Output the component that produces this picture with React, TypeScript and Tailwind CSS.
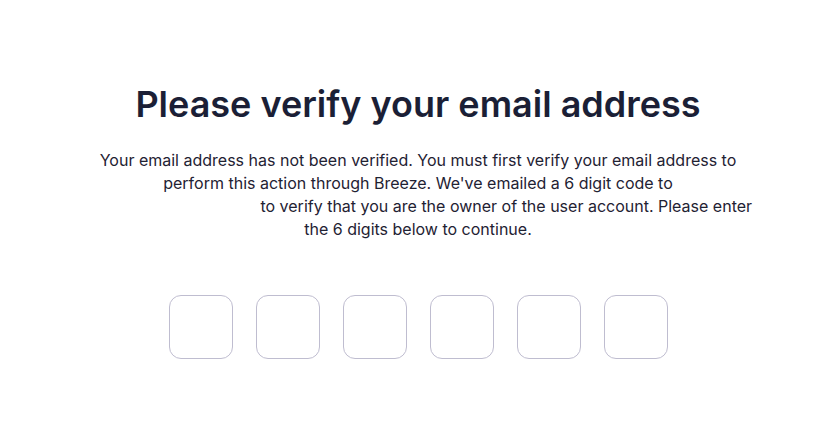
export default function App() {
  const digits = [0, 1, 2, 3, 4, 5];

  return (
    <div className="flex min-h-screen flex-col items-center bg-white pr-[3px] pt-[80px] font-['Inter',sans-serif]">
      <h1 className="text-[36px] font-semibold leading-[48px] text-[#1b1f36]">Please verify your email address</h1>

      <p className="mt-[21px] w-[680px] text-center text-[16px] leading-[23px] text-[#1f2233]">
        Your email address has not been verified. You must first verify your email address to perform this action
        through Breeze. We've emailed a 6 digit code to <span className="inline-block w-[172px]" /> to verify that
        you are the owner of the user account. Please enter the 6 digits below to continue.
      </p>

      <div className="mt-[54px] flex gap-[23px]">
        {digits.map((d) => (
          <input
            key={d}
            type="text"
            maxLength={1}
            aria-label={`Digit ${d + 1}`}
            className="h-[64px] w-[64px] rounded-[12px] border border-[#bfbdd0] bg-white text-center text-2xl text-[#1b1f36] outline-none"
          />
        ))}
      </div>
    </div>
  );
}
